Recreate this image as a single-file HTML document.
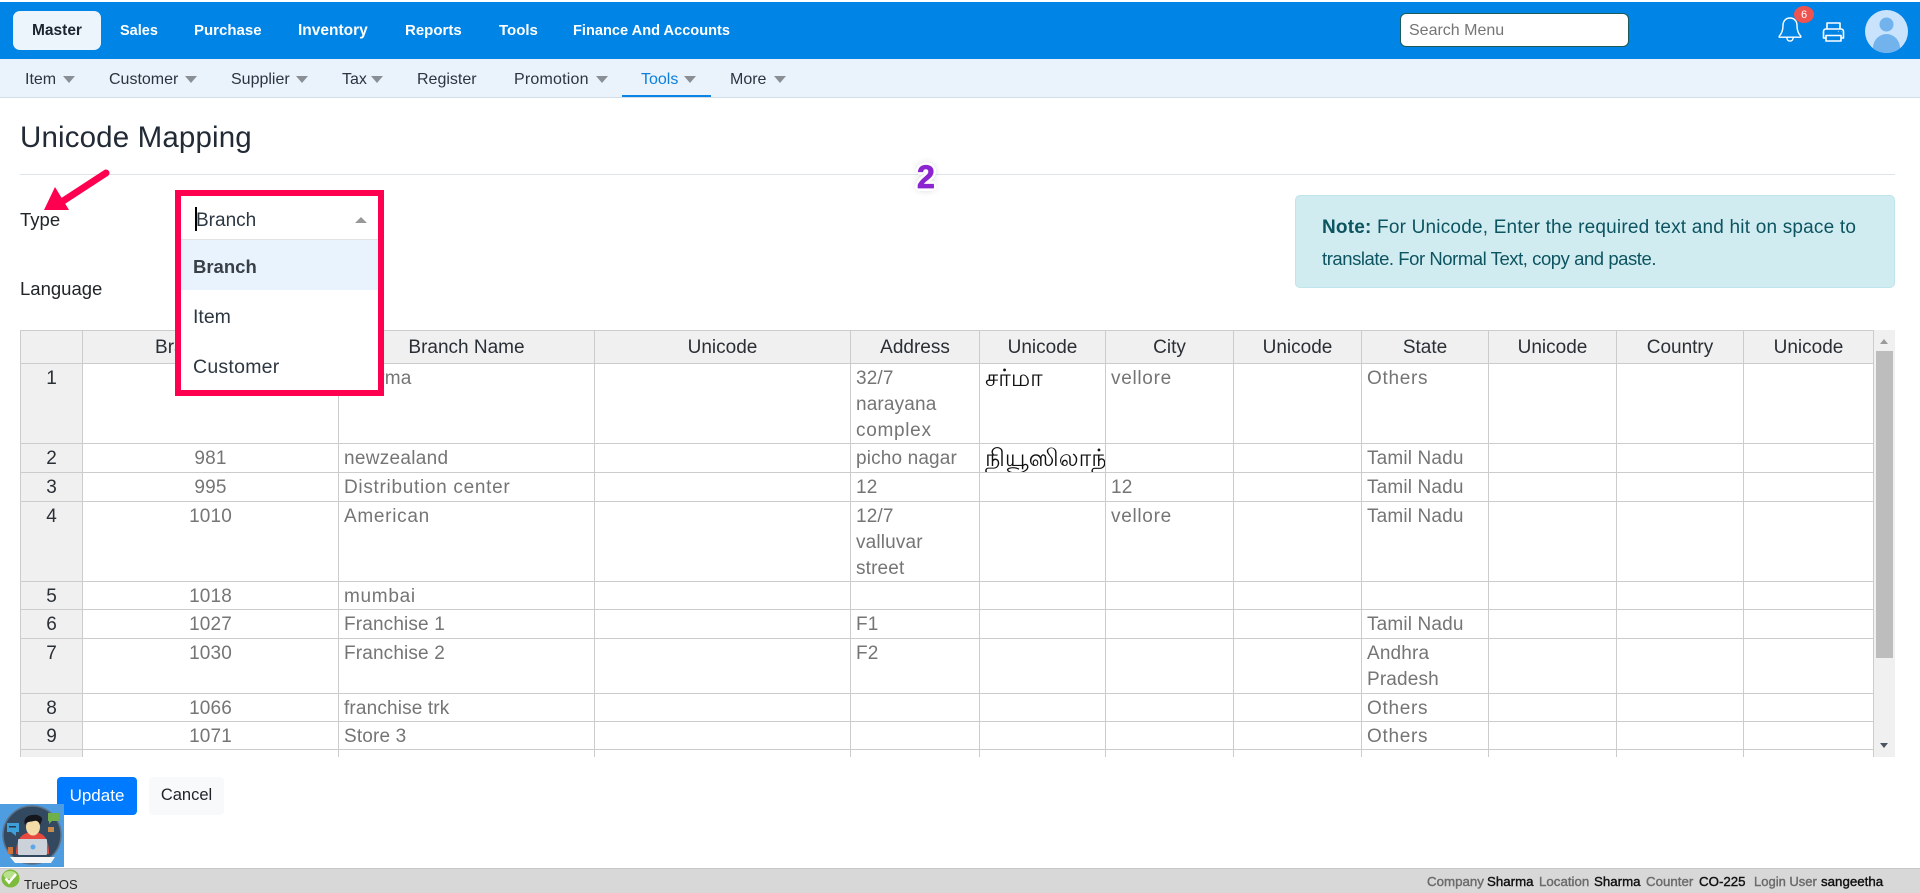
<!DOCTYPE html>
<html lang="en"><head><meta charset="utf-8"><title>Unicode Mapping</title>
<style>
*{box-sizing:border-box}
html,body{margin:0;padding:0;width:1920px;height:893px;overflow:hidden;background:#fff;font-family:"Liberation Sans","Noto Sans CJK JP",sans-serif;color:#212529}
.a{position:absolute;white-space:nowrap}
#top{position:absolute;left:0;top:2px;width:1920px;height:57px;background:#0084e6}
#sub{position:absolute;left:0;top:59px;width:1920px;height:39px;background:#eaf3fb;border-bottom:1px solid #d3dde6}
.m{position:absolute;top:22px;font-weight:700;font-size:15px;line-height:18px;color:#fff;white-space:nowrap}
.s{position:absolute;top:71px;font-size:16px;line-height:18px;color:#2b3440;white-space:nowrap}
.t{position:absolute;top:76px;width:0;height:0;border-left:6.5px solid transparent;border-right:6.5px solid transparent;border-top:7px solid #8a8f96}
#tbl{position:absolute;left:20px;top:330px;width:1853px;height:427px;overflow:hidden}
table{border-collapse:separate;border-spacing:0;table-layout:fixed;width:1854px}
td,th{border-right:1px solid #ccc;border-bottom:1px solid #ccc;padding:3px 0 0 5px;overflow:hidden;white-space:nowrap;vertical-align:top;font-size:19px;line-height:24px;color:#757575;font-weight:400;background:#fff;letter-spacing:.15px}
th{background:#f0f0f0;color:#2a2f36;text-align:center;font-size:19px;padding:4px 0 0;letter-spacing:0;line-height:26px}
tr:first-child th{border-top:1px solid #ccc}
tr>*:first-child{border-left:1px solid #ccc;background:#f0f0f0;color:#2a2f36;text-align:center;padding-left:0;padding-right:0;letter-spacing:0}
td.c{text-align:center;padding-left:0}
td.u{color:#111;font-size:24px;letter-spacing:0}
td.l{line-height:26.2px;padding-top:0}
td.l div{position:relative;top:2px}
.w{letter-spacing:.7px}
.f{-webkit-text-stroke:.4px;font-size:13.3px;line-height:16px;top:874px;position:absolute;white-space:nowrap}
.g{color:#6b6b6b}.k{color:#111}
</style></head><body>

<div id="top"></div>
<div class="a" style="left:13px;top:11px;width:88px;height:39px;background:#edf5fc;border-radius:7px"></div>
<div class="m" style="left:32px;color:#1c2430;font-size:15.5px">Master</div>
<div class="m" style="left:120px;font-size:14.5px">Sales</div>
<div class="m" style="left:194px;font-size:15px">Purchase</div>
<div class="m" style="left:298px;font-size:15.5px">Inventory</div>
<div class="m" style="left:405px">Reports</div>
<div class="m" style="left:499px">Tools</div>
<div class="m" style="left:573px;font-size:14.6px">Finance And Accounts</div>

<div class="a" style="left:1400px;top:13px;width:229px;height:34px;background:#fff;border:1px solid #1c5a5a;border-radius:6px;padding:1px 0 0 8px;font-size:16px;line-height:32px;color:#757575">Search Menu</div>

<svg class="a" style="left:1776px;top:14px" width="28" height="30" viewBox="0 0 28 30" fill="none" stroke="#fff" stroke-width="1.4" stroke-linejoin="round"><path d="M14 4c-4.6 0-7 3.500-7 7.600 0 5-1.400 8-3.800 10.600v1h21.600v-1c-2.400-2.600-3.800-5.600-3.800-10.600C21 7.500 18.600 4 14 4z"/><path d="M10.800 23.300c0 2.400 1.400 3.800 3.200 3.800s3.200-1.400 3.200-3.800"/></svg>
<div class="a" style="left:1794px;top:6px;width:20px;height:17px;border-radius:50%;background:#ef5350;color:#fff;font-size:11px;line-height:18px;text-align:center">6</div>
<svg class="a" style="left:1821px;top:20px" width="25" height="24" viewBox="0 0 25 24" fill="none" stroke="#fff" stroke-width="1.6" stroke-linejoin="round"><path d="M6 9V3h13v6"/><path d="M5 18H2.500V11.500C2.500 10 3.500 9 5 9h15c1.500 0 2.500 1 2.500 2.500V18H20"/><path d="M5 15.500h15V21H5z"/><path d="M17.500 11.500h.5M20 11.500h.3" stroke-width="1.200"/></svg>
<svg class="a" style="left:1865px;top:10px" width="43" height="43" viewBox="0 0 43 43"><defs><clipPath id="av"><circle cx="21.500" cy="21.500" r="21.500"/></clipPath></defs><circle cx="21.500" cy="21.500" r="21.500" fill="#c8e3fb"/><g clip-path="url(#av)" fill="#72b3ee"><circle cx="21.500" cy="14.500" r="7"/><ellipse cx="21.500" cy="38" rx="13.500" ry="14"/></g></svg>

<div id="sub"></div>
<div class="s" style="left:25px">Item</div><div class="t" style="left:63px"></div>
<div class="s" style="left:109px">Customer</div><div class="t" style="left:185px"></div>
<div class="s" style="left:231px">Supplier</div><div class="t" style="left:296px"></div>
<div class="s" style="left:342px">Tax</div><div class="t" style="left:371px"></div>
<div class="s" style="left:417px">Register</div>
<div class="s" style="left:514px;letter-spacing:.2px">Promotion</div><div class="t" style="left:596px"></div>
<div class="s" style="left:641px;color:#0a7fdc">Tools</div><div class="t" style="left:684px"></div>
<div class="s" style="left:730px">More</div><div class="t" style="left:774px"></div>
<div class="a" style="left:622px;top:95px;width:89px;height:2px;background:#0a84e6"></div>

<div class="a" style="left:20px;top:120px;font-size:29.5px;line-height:36px;color:#212a35;letter-spacing:.15px">Unicode Mapping</div>
<div class="a" style="left:20px;top:174px;width:1875px;height:1px;background:#dde5ea"></div>

<div class="a" style="left:20px;top:208px;font-size:18.5px;line-height:24px">Type</div>
<div class="a" style="left:20px;top:277px;font-size:18.5px;line-height:24px">Language</div>

<div class="a" style="left:1295px;top:195px;width:600px;height:93px;background:#d1ecf1;border:1px solid #bee5eb;border-radius:5px;padding:17px 0 0 26px;line-height:30px;color:#0c5460"><span style="font-size:19px;letter-spacing:.2px"><b>Note:</b> For Unicode, Enter the required text and hit on space to</span><br><span style="font-size:18.5px;letter-spacing:-.45px">translate. For Normal Text, copy and paste.</span></div>

<div id="tbl"><table>
<colgroup><col style="width:63px"><col style="width:256px"><col style="width:256px"><col style="width:256px"><col style="width:129px"><col style="width:126px"><col style="width:128px"><col style="width:128px"><col style="width:127px"><col style="width:128px"><col style="width:127px"><col style="width:130px"></colgroup>
<tr style="height:34px"><th></th><th>Branch Code</th><th>Branch Name</th><th>Unicode</th><th>Address</th><th>Unicode</th><th>City</th><th>Unicode</th><th>State</th><th>Unicode</th><th>Country</th><th>Unicode</th></tr>
<tr style="height:80px"><td>1</td><td class="c">975</td><td>Sharma</td><td></td><td class="l"><div>32/7<br>narayana<br><span class="w">complex</span></div></td><td class="u">சர்மா</td><td class="w">vellore</td><td></td><td class="w">Others</td><td></td><td></td><td></td></tr>
<tr style="height:29px"><td>2</td><td class="c">981</td><td style="letter-spacing:.3px">newzealand</td><td></td><td>picho nagar</td><td class="u">நியூஸிலாந்து</td><td></td><td></td><td>Tamil Nadu</td><td></td><td></td><td></td></tr>
<tr style="height:29px"><td>3</td><td class="c">995</td><td class="w">Distribution center</td><td></td><td>12</td><td></td><td>12</td><td></td><td>Tamil Nadu</td><td></td><td></td><td></td></tr>
<tr style="height:80px"><td>4</td><td class="c">1010</td><td class="w">American</td><td></td><td class="l"><div>12/7<br>valluvar<br>street</div></td><td></td><td class="w">vellore</td><td></td><td>Tamil Nadu</td><td></td><td></td><td></td></tr>
<tr style="height:28px"><td>5</td><td class="c">1018</td><td class="w">mumbai</td><td></td><td></td><td></td><td></td><td></td><td></td><td></td><td></td><td></td></tr>
<tr style="height:29px"><td>6</td><td class="c">1027</td><td>Franchise 1</td><td></td><td>F1</td><td></td><td></td><td></td><td>Tamil Nadu</td><td></td><td></td><td></td></tr>
<tr style="height:55px"><td>7</td><td class="c">1030</td><td>Franchise 2</td><td></td><td>F2</td><td></td><td></td><td></td><td class="l"><div>Andhra<br>Pradesh</div></td><td></td><td></td><td></td></tr>
<tr style="height:28px"><td>8</td><td class="c">1066</td><td>franchise trk</td><td></td><td></td><td></td><td></td><td></td><td class="w">Others</td><td></td><td></td><td></td></tr>
<tr style="height:28px"><td>9</td><td class="c">1071</td><td>Store 3</td><td></td><td></td><td></td><td></td><td></td><td class="w">Others</td><td></td><td></td><td></td></tr>
<tr style="height:28px"><td></td><td></td><td></td><td></td><td></td><td></td><td></td><td></td><td></td><td></td><td></td><td></td></tr>
</table></div>

<div class="a" style="left:1873px;top:330px;width:22px;height:427px;background:#f0f0f0;border-left:1px solid #ccc"></div>
<div class="a" style="left:1876px;top:351px;width:17px;height:307px;background:#bdbdbd"></div>
<div class="a" style="left:1880px;top:339px;width:0;height:0;border-left:4.5px solid transparent;border-right:4.5px solid transparent;border-bottom:5px solid #9a9a9a"></div>
<div class="a" style="left:1880px;top:743px;width:0;height:0;border-left:4.5px solid transparent;border-right:4.5px solid transparent;border-top:5px solid #4a5560"></div>

<div class="a" style="left:175px;top:190px;width:209px;height:206px;background:#fff;border:6px solid #ff0050"></div>
<div class="a" style="left:181px;top:239px;width:197px;height:1px;background:#e4e4e4"></div>
<div class="a" style="left:181px;top:240px;width:197px;height:50px;background:#e8f3fe"></div>
<div class="a" style="left:196px;top:209px;font-size:19px;line-height:24px;color:#2d3742">Branch</div>
<div class="a" style="left:195px;top:207px;width:2px;height:24px;background:#000"></div>
<div class="a" style="left:355px;top:217px;width:0;height:0;border-left:6px solid transparent;border-right:6px solid transparent;border-bottom:6px solid #999"></div>
<div class="a" style="left:193px;top:255px;font-size:18.5px;line-height:24px;font-weight:700;color:#3a3f46">Branch</div>
<div class="a" style="left:193px;top:305px;font-size:19.5px;line-height:24px;color:#2d3742">Item</div>
<div class="a" style="left:193px;top:355px;font-size:19.5px;line-height:24px;color:#2d3742;letter-spacing:.25px">Customer</div>

<svg class="a" style="left:36px;top:165px" width="80" height="52" viewBox="0 0 80 52"><path d="M70 8L24 38" stroke="#ff0050" stroke-width="7" stroke-linecap="round" fill="none"/><path d="M8 45L19 22 33 45z" fill="#ff0050"/></svg>

<div class="a" style="left:917px;top:155px;font-size:32px;line-height:44px;font-weight:700;color:#8a25cf;-webkit-text-stroke:.8px #8a25cf;text-shadow:-3px 0 0 #fff,3px 0 0 #fff,0 -3px 0 #fff,0 3px 0 #fff,-2px -2px 0 #fff,2px -2px 0 #fff,-2px 2px 0 #fff,2px 2px 0 #fff,0 0 8px #999">2</div>

<div class="a" style="left:57px;top:777px;width:80px;height:38px;background:#007bff;border-radius:4px;color:#fff;text-align:center;font-size:17px;line-height:37px">Update</div>
<div class="a" style="left:149px;top:777px;width:75px;height:38px;background:#f8f9fa;border-radius:4px;color:#212529;text-align:center;font-size:16.5px;line-height:37px">Cancel</div>

<svg class="a" style="left:0;top:804px" width="64" height="63" viewBox="0 0 64 63"><rect width="64" height="63" fill="#4e9de0"/><circle cx="32" cy="31" r="29" fill="#33495f" stroke="#5d7389" stroke-width="1.5"/>
<path d="M16 50c0-15 6-22 17-22s16 7 16 22z" fill="#e8493f"/><ellipse cx="33" cy="23" rx="7" ry="8.5" fill="#f3dca8"/><path d="M25 21c-2-6 2-10 8-10 5-1 10 2 9 5-1 2-1 3-2 5-1-3-3-5-6-4-3 1-7 0-9 4z" fill="#14161c"/><rect x="18" y="35" width="29" height="16" rx="1" fill="#ccd2d9"/><circle cx="33" cy="43" r="2.5" fill="#5aa6e8"/><path d="M10 53h45l-4 6H15z" fill="#f2f4f6"/><rect x="7" y="19" width="12" height="9" fill="#3f9fd8"/><path d="M11 28h5v4z" fill="#3f9fd8"/><rect x="9" y="22" width="7" height="1.500" fill="#26384a"/><rect x="48" y="9" width="11" height="8" fill="#6fb04a"/><path d="M49 17h3l-3 3z" fill="#6fb04a"/><rect x="48" y="23" width="6" height="5" fill="#c98a4a"/><rect x="8" y="43" width="5" height="7" fill="#c9733f"/></svg>

<div class="a" style="left:0;top:868px;width:1920px;height:25px;background:#d8d8d8;border-top:1px solid #c8c8c8"></div>
<svg class="a" style="left:1px;top:869px" width="19" height="19" viewBox="0 0 19 19"><circle cx="9.5" cy="9.5" r="9" fill="#7dbb3c"/><ellipse cx="9" cy="6" rx="6.5" ry="4" fill="#b9e08a"/><path d="M4.500 9.500l3.500 4L15 5" fill="none" stroke="#fff" stroke-width="2.5"/></svg>
<div class="a" style="left:24px;top:877px;font-size:13px;line-height:16px;color:#222">TruePOS</div>
<div class="f g" style="left:1427px">Company</div>
<div class="f k" style="left:1487px">Sharma</div>
<div class="f g" style="left:1539px">Location</div>
<div class="f k" style="left:1594px">Sharma</div>
<div class="f g" style="left:1646px">Counter</div>
<div class="f k" style="left:1699px">CO-225</div>
<div class="f g" style="left:1754px;font-size:13px">Login User</div>
<div class="f k" style="left:1821px">sangeetha</div>
</body></html>
